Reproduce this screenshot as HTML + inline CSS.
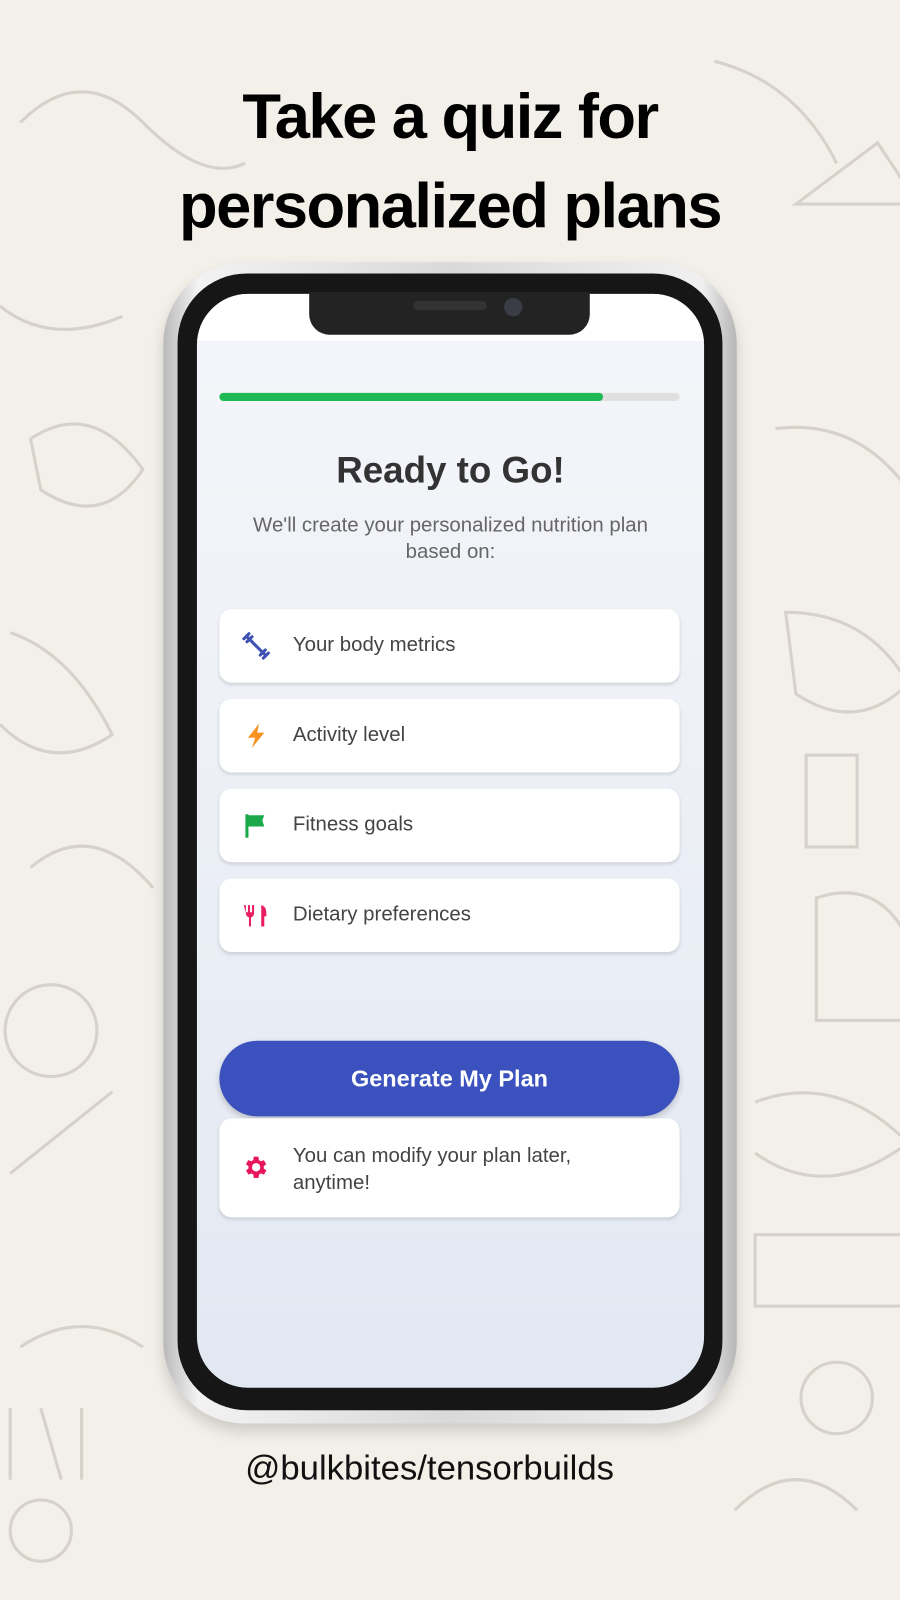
<!DOCTYPE html>
<html><head><meta charset="utf-8"><style>
*{margin:0;padding:0;box-sizing:border-box}
body{width:900px;height:1600px;background:#f3efe9;position:relative;overflow:hidden;font-family:"Liberation Sans",sans-serif}
#w{position:absolute;left:0;top:0;width:882px;height:1568px;transform:scale(1.0204);transform-origin:0 0}
.t{position:absolute;left:0;width:882px;text-align:center;font-weight:bold;color:#000;font-size:62px;letter-spacing:-1.5px;line-height:1}
.abs{position:absolute}
.card{position:absolute;left:215px;width:451px;height:72px;background:#fff;border-radius:12px;box-shadow:0 2px 3px rgba(0,0,0,.12);font-size:20px;color:#444}
.card span{position:absolute;left:72px;top:24px}
.card svg{position:absolute;left:22px;top:22px}
</style></head><body><div id="w">
<svg class="abs" style="left:0;top:0" width="882" height="1568" fill="none" stroke="#cfcac2" stroke-width="3" opacity=".8">
<path d="M20 120 q60 -60 120 0 t100 40"/><path d="M700 60 q80 20 120 100"/><path d="M780 200 l80 -60 l40 60 z"/>
<path d="M0 300 q50 40 120 10"/><path d="M30 430 q60 -40 110 30 q-40 60 -100 20 z"/><path d="M760 420 q80 -10 130 60"/>
<path d="M10 620 q60 20 100 100 q-60 40 -110 -10"/><path d="M770 600 q80 0 120 70 q-50 50 -110 10 z"/>
<path d="M30 850 q60 -50 120 20"/><path d="M790 740 h50 v90 h-50 z"/><path d="M800 880 q60 -20 90 40 v80 h-90 z"/>
<circle cx="50" cy="1010" r="45"/><path d="M10 1150 l100 -80"/><path d="M740 1080 q80 -30 150 40 q-80 60 -150 10"/>
<path d="M740 1210 h150 v70 h-150 z"/><path d="M20 1320 q60 -40 120 0"/><circle cx="820" cy="1370" r="35"/>
<path d="M10 1380 v70 M40 1380 l20 70 M80 1380 v70"/><circle cx="40" cy="1500" r="30"/><path d="M720 1480 q60 -60 120 0"/>
</svg>
<div class="t" style="top:84px">Take a quiz for</div>
<div class="t" style="top:172px">personalized plans</div>

<div class="abs" style="left:160px;top:257px;width:562px;height:1138px;border-radius:80px;background:linear-gradient(90deg,#b9b9b9,#f2f2f2 6%,#d9d9d9 50%,#f0f0f0 94%,#b5b5b5);box-shadow:0 8px 14px rgba(0,0,0,.15)"></div>
<div class="abs" style="left:174px;top:268px;width:534px;height:1114px;border-radius:68px;background:#161616"></div>
<div class="abs" style="left:193px;top:288px;width:497px;height:1072px;border-radius:50px;background:linear-gradient(#f5f6fa,#e2e8f2);overflow:hidden">
  <div class="abs" style="left:0;top:0;width:497px;height:46px;background:#fff"></div>
</div>
<div class="abs" style="left:303px;top:286px;width:275px;height:42px;background:#232323;border-radius:0 0 20px 20px"></div>
<div class="abs" style="left:405px;top:295px;width:72px;height:9px;background:#333;border-radius:5px"></div>
<div class="abs" style="left:494px;top:292px;width:18px;height:18px;background:#3a3d45;border-radius:50%"></div>

<div class="abs" style="left:215px;top:385px;width:451px;height:8px;background:#e0e0e0;border-radius:4px"></div>
<div class="abs" style="left:215px;top:385px;width:376px;height:8px;background:#1db954;border-radius:4px"></div>

<div class="abs" style="left:193px;top:440px;width:497px;text-align:center;font-size:36px;font-weight:bold;color:#333">Ready to Go!</div>
<div class="abs" style="left:193px;top:502px;width:497px;text-align:center;font-size:20px;color:#666;line-height:26px">We'll create your personalized nutrition plan<br>based on:</div>

<div class="card" style="top:597px"><svg width="28" height="28" viewBox="0 0 28 28"><g stroke="#3f51b5" stroke-width="3" stroke-linecap="round"><path d="M6 6 L22 22"/><path d="M2 7 L7 2 M5 10 L10 5 M18 23 L23 18 M21 26 L26 21"/></g></svg><span>Your body metrics</span></div>
<div class="card" style="top:685px"><svg width="28" height="28" viewBox="0 0 28 28"><path d="M17 2 L6 16 H13 L10 26 L22 11 H15 Z" fill="#f7931e"/></svg><span>Activity level</span></div>
<div class="card" style="top:773px"><svg width="28" height="28" viewBox="0 0 28 28"><path d="M5 3 V26" stroke="#1aa84a" stroke-width="3"/><path d="M6 4 H22 L20 9 L22 15 H6 Z" fill="#1aa84a"/></svg><span>Fitness goals</span></div>
<div class="card" style="top:861px"><svg width="28" height="28" viewBox="0 0 28 28" fill="#e91e63"><path d="M3 4h2v7h2V4h2v7h2V4h2v8q0 3 -3 4v9H8v-9q-3 -1 -3 -4z" transform="translate(-1 0)"/><path d="M19 4q5 1 5 8v3h-2v10h-3z"/></svg><span>Dietary preferences</span></div>

<div class="abs" style="left:215px;top:1020px;width:451px;height:74px;border-radius:37px;background:#3b51bd;box-shadow:0 3px 6px rgba(0,0,0,.2);color:#fff;font-size:23px;font-weight:bold;text-align:center;line-height:74px">Generate My Plan</div>
<div class="card" style="top:1096px;height:97px"><svg style="top:34px" width="28" height="28" viewBox="0 0 24 24"><path fill="#e8175d" d="M19.4 13a7.5 7.5 0 0 0 0-2l2.1-1.6-2-3.5-2.5 1a7 7 0 0 0-1.7-1L15 3h-4l-.4 2.9a7 7 0 0 0-1.7 1l-2.5-1-2 3.5L6.6 11a7.5 7.5 0 0 0 0 2l-2.1 1.6 2 3.5 2.5-1a7 7 0 0 0 1.7 1L11 21h4l.4-2.9a7 7 0 0 0 1.7-1l2.5 1 2-3.5zM13 15.5a3.5 3.5 0 1 1 0-7 3.5 3.5 0 0 1 0 7z" transform="translate(-1 0)"/></svg><span style="top:24px;line-height:26px">You can modify your plan later,<br>anytime!</span></div>

<div class="abs" style="left:0;top:1420px;width:842px;text-align:center;font-size:34px;color:#111">@bulkbites/tensorbuilds</div>
</div></body></html>
